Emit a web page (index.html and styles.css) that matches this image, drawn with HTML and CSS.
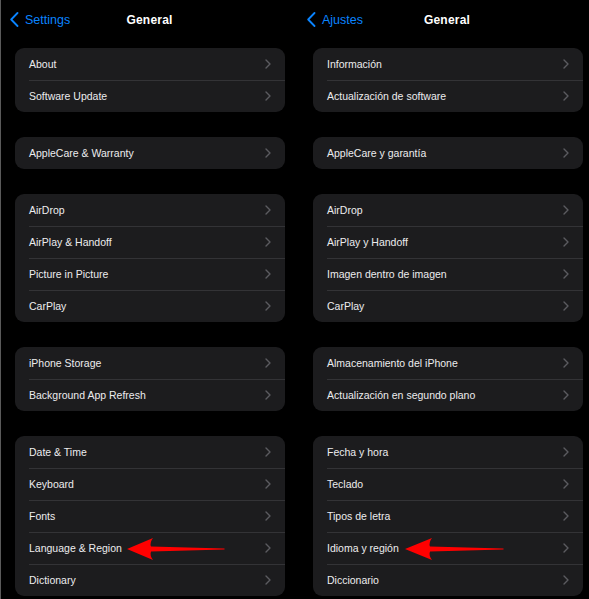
FILE: index.html
```html
<!DOCTYPE html>
<html lang="en">
<head>
<meta charset="utf-8">
<title>General</title>
<link rel="stylesheet" href="styles.css">
</head>
<body>
<div class="screens">
  <section class="panel panel-left">
    <header class="nav">
      <div class="back">
        <svg class="back-chev" width="9" height="15" viewBox="0 0 9 15"><polyline points="7.5,1 1.2,7.5 7.5,14" fill="none" stroke="#0a84ff" stroke-width="1.8" stroke-linecap="round" stroke-linejoin="round"/></svg>
        <span>Settings</span>
      </div>
      <h1 class="title">General</h1>
      <div></div>
    </header>
    <div class="group">
      <div class="row"><span>About</span><svg class="chev" width="6" height="10" viewBox="0 0 6 10"><polyline points="1,1 5,5 1,9" fill="none" stroke="#5b5b60" stroke-width="1.4" stroke-linecap="round" stroke-linejoin="round"/></svg></div>
      <div class="row"><span>Software Update</span><svg class="chev" width="6" height="10" viewBox="0 0 6 10"><polyline points="1,1 5,5 1,9" fill="none" stroke="#5b5b60" stroke-width="1.4" stroke-linecap="round" stroke-linejoin="round"/></svg></div>
    </div>
    <div class="group">
      <div class="row"><span>AppleCare &amp; Warranty</span><svg class="chev" width="6" height="10" viewBox="0 0 6 10"><polyline points="1,1 5,5 1,9" fill="none" stroke="#5b5b60" stroke-width="1.4" stroke-linecap="round" stroke-linejoin="round"/></svg></div>
    </div>
    <div class="group">
      <div class="row"><span>AirDrop</span><svg class="chev" width="6" height="10" viewBox="0 0 6 10"><polyline points="1,1 5,5 1,9" fill="none" stroke="#5b5b60" stroke-width="1.4" stroke-linecap="round" stroke-linejoin="round"/></svg></div>
      <div class="row"><span>AirPlay &amp; Handoff</span><svg class="chev" width="6" height="10" viewBox="0 0 6 10"><polyline points="1,1 5,5 1,9" fill="none" stroke="#5b5b60" stroke-width="1.4" stroke-linecap="round" stroke-linejoin="round"/></svg></div>
      <div class="row"><span>Picture in Picture</span><svg class="chev" width="6" height="10" viewBox="0 0 6 10"><polyline points="1,1 5,5 1,9" fill="none" stroke="#5b5b60" stroke-width="1.4" stroke-linecap="round" stroke-linejoin="round"/></svg></div>
      <div class="row"><span>CarPlay</span><svg class="chev" width="6" height="10" viewBox="0 0 6 10"><polyline points="1,1 5,5 1,9" fill="none" stroke="#5b5b60" stroke-width="1.4" stroke-linecap="round" stroke-linejoin="round"/></svg></div>
    </div>
    <div class="group">
      <div class="row"><span>iPhone Storage</span><svg class="chev" width="6" height="10" viewBox="0 0 6 10"><polyline points="1,1 5,5 1,9" fill="none" stroke="#5b5b60" stroke-width="1.4" stroke-linecap="round" stroke-linejoin="round"/></svg></div>
      <div class="row"><span>Background App Refresh</span><svg class="chev" width="6" height="10" viewBox="0 0 6 10"><polyline points="1,1 5,5 1,9" fill="none" stroke="#5b5b60" stroke-width="1.4" stroke-linecap="round" stroke-linejoin="round"/></svg></div>
    </div>
    <div class="group">
      <div class="row"><span>Date &amp; Time</span><svg class="chev" width="6" height="10" viewBox="0 0 6 10"><polyline points="1,1 5,5 1,9" fill="none" stroke="#5b5b60" stroke-width="1.4" stroke-linecap="round" stroke-linejoin="round"/></svg></div>
      <div class="row"><span>Keyboard</span><svg class="chev" width="6" height="10" viewBox="0 0 6 10"><polyline points="1,1 5,5 1,9" fill="none" stroke="#5b5b60" stroke-width="1.4" stroke-linecap="round" stroke-linejoin="round"/></svg></div>
      <div class="row"><span>Fonts</span><svg class="chev" width="6" height="10" viewBox="0 0 6 10"><polyline points="1,1 5,5 1,9" fill="none" stroke="#5b5b60" stroke-width="1.4" stroke-linecap="round" stroke-linejoin="round"/></svg></div>
      <div class="row row-marked"><span>Language &amp; Region</span>
        <svg class="arrow arrow-left" width="98" height="24" viewBox="0 0 98 24"><path d="M0 12 L26 1 Q22.5 5.5 24 9.6 L97.5 11.5 L97.5 12.5 L24 14.6 Q22.5 18.5 26 23 Z" fill="#ff0000"/></svg>
        <svg class="chev" width="6" height="10" viewBox="0 0 6 10"><polyline points="1,1 5,5 1,9" fill="none" stroke="#5b5b60" stroke-width="1.4" stroke-linecap="round" stroke-linejoin="round"/></svg></div>
      <div class="row"><span>Dictionary</span><svg class="chev" width="6" height="10" viewBox="0 0 6 10"><polyline points="1,1 5,5 1,9" fill="none" stroke="#5b5b60" stroke-width="1.4" stroke-linecap="round" stroke-linejoin="round"/></svg></div>
    </div>
  </section>

  <section class="panel panel-right" lang="es">
    <header class="nav">
      <div class="back">
        <svg class="back-chev" width="9" height="15" viewBox="0 0 9 15"><polyline points="7.5,1 1.2,7.5 7.5,14" fill="none" stroke="#0a84ff" stroke-width="1.8" stroke-linecap="round" stroke-linejoin="round"/></svg>
        <span>Ajustes</span>
      </div>
      <h1 class="title">General</h1>
      <div></div>
    </header>
    <div class="group">
      <div class="row"><span>Información</span><svg class="chev" width="6" height="10" viewBox="0 0 6 10"><polyline points="1,1 5,5 1,9" fill="none" stroke="#5b5b60" stroke-width="1.4" stroke-linecap="round" stroke-linejoin="round"/></svg></div>
      <div class="row"><span>Actualización de software</span><svg class="chev" width="6" height="10" viewBox="0 0 6 10"><polyline points="1,1 5,5 1,9" fill="none" stroke="#5b5b60" stroke-width="1.4" stroke-linecap="round" stroke-linejoin="round"/></svg></div>
    </div>
    <div class="group">
      <div class="row"><span>AppleCare y garantía</span><svg class="chev" width="6" height="10" viewBox="0 0 6 10"><polyline points="1,1 5,5 1,9" fill="none" stroke="#5b5b60" stroke-width="1.4" stroke-linecap="round" stroke-linejoin="round"/></svg></div>
    </div>
    <div class="group">
      <div class="row"><span>AirDrop</span><svg class="chev" width="6" height="10" viewBox="0 0 6 10"><polyline points="1,1 5,5 1,9" fill="none" stroke="#5b5b60" stroke-width="1.4" stroke-linecap="round" stroke-linejoin="round"/></svg></div>
      <div class="row"><span>AirPlay y Handoff</span><svg class="chev" width="6" height="10" viewBox="0 0 6 10"><polyline points="1,1 5,5 1,9" fill="none" stroke="#5b5b60" stroke-width="1.4" stroke-linecap="round" stroke-linejoin="round"/></svg></div>
      <div class="row"><span>Imagen dentro de imagen</span><svg class="chev" width="6" height="10" viewBox="0 0 6 10"><polyline points="1,1 5,5 1,9" fill="none" stroke="#5b5b60" stroke-width="1.4" stroke-linecap="round" stroke-linejoin="round"/></svg></div>
      <div class="row"><span>CarPlay</span><svg class="chev" width="6" height="10" viewBox="0 0 6 10"><polyline points="1,1 5,5 1,9" fill="none" stroke="#5b5b60" stroke-width="1.4" stroke-linecap="round" stroke-linejoin="round"/></svg></div>
    </div>
    <div class="group">
      <div class="row"><span>Almacenamiento del iPhone</span><svg class="chev" width="6" height="10" viewBox="0 0 6 10"><polyline points="1,1 5,5 1,9" fill="none" stroke="#5b5b60" stroke-width="1.4" stroke-linecap="round" stroke-linejoin="round"/></svg></div>
      <div class="row"><span>Actualización en segundo plano</span><svg class="chev" width="6" height="10" viewBox="0 0 6 10"><polyline points="1,1 5,5 1,9" fill="none" stroke="#5b5b60" stroke-width="1.4" stroke-linecap="round" stroke-linejoin="round"/></svg></div>
    </div>
    <div class="group">
      <div class="row"><span>Fecha y hora</span><svg class="chev" width="6" height="10" viewBox="0 0 6 10"><polyline points="1,1 5,5 1,9" fill="none" stroke="#5b5b60" stroke-width="1.4" stroke-linecap="round" stroke-linejoin="round"/></svg></div>
      <div class="row"><span>Teclado</span><svg class="chev" width="6" height="10" viewBox="0 0 6 10"><polyline points="1,1 5,5 1,9" fill="none" stroke="#5b5b60" stroke-width="1.4" stroke-linecap="round" stroke-linejoin="round"/></svg></div>
      <div class="row"><span>Tipos de letra</span><svg class="chev" width="6" height="10" viewBox="0 0 6 10"><polyline points="1,1 5,5 1,9" fill="none" stroke="#5b5b60" stroke-width="1.4" stroke-linecap="round" stroke-linejoin="round"/></svg></div>
      <div class="row row-marked"><span>Idioma y región</span>
        <svg class="arrow arrow-right" width="99" height="24" viewBox="0 0 99 24"><path d="M0 12 L27 1 Q23.5 5.5 25 9.6 L98.5 11.5 L98.5 12.5 L25 14.6 Q23.5 18.5 27 23 Z" fill="#ff0000"/></svg>
        <svg class="chev" width="6" height="10" viewBox="0 0 6 10"><polyline points="1,1 5,5 1,9" fill="none" stroke="#5b5b60" stroke-width="1.4" stroke-linecap="round" stroke-linejoin="round"/></svg></div>
      <div class="row"><span>Diccionario</span><svg class="chev" width="6" height="10" viewBox="0 0 6 10"><polyline points="1,1 5,5 1,9" fill="none" stroke="#5b5b60" stroke-width="1.4" stroke-linecap="round" stroke-linejoin="round"/></svg></div>
    </div>
  </section>
</div>
</body>
</html>
```

FILE: styles.css
```css
* { box-sizing: border-box; }

html, body {
  margin: 0;
  padding: 0;
  background: #000;
  overflow: hidden;
}

body {
  font-family: "Liberation Sans", Arial, sans-serif;
  color: #ececee;
  width: 589px;
  height: 599px;
}

.screens {
  display: flex;
  width: 596px;
  height: 599px;
}

.panel {
  flex: 0 0 298px;
  width: 298px;
  padding: 0 13px 0 15px;
  display: flex;
  flex-direction: column;
  gap: 25px;
}

.panel-left {
  border-left: 1px solid #5a5a5a;
  padding-left: 14px;
}

.nav {
  height: 39px;
  margin-bottom: -16px;
  margin-left: -15px;
  margin-right: -13px;
  display: grid;
  grid-template-columns: 1fr auto 1fr;
  align-items: center;
}

.panel-left .nav {
  margin-left: -14px;
}

.back {
  display: flex;
  align-items: center;
  gap: 6px;
  padding-left: 9px;
  color: #0a84ff;
  font-size: 12.5px;
}

.back-chev {
  display: block;
}

.title {
  margin: 0;
  font-size: 12px;
  font-weight: bold;
  color: #fff;
  letter-spacing: 0.2px;
}

.group {
  background: #1c1c1e;
  border-radius: 9px;
  width: 270px;
  overflow: hidden;
  flex: 0 0 auto;
}

.row {
  position: relative;
  height: 32px;
  margin-left: 14px;
  padding-right: 14px;
  padding-bottom: 1px;
  display: flex;
  align-items: center;
  justify-content: space-between;
  font-size: 10.5px;
  border-top: 1px solid #333336;
}

.row:first-child {
  border-top: none;
}

.chev {
  display: block;
  flex: 0 0 auto;
}

.arrow {
  position: absolute;
  top: 50%;
  transform: translateY(-50%);
}

.arrow-left {
  left: 98px;
}

.arrow-right {
  left: 78px;
}
```
